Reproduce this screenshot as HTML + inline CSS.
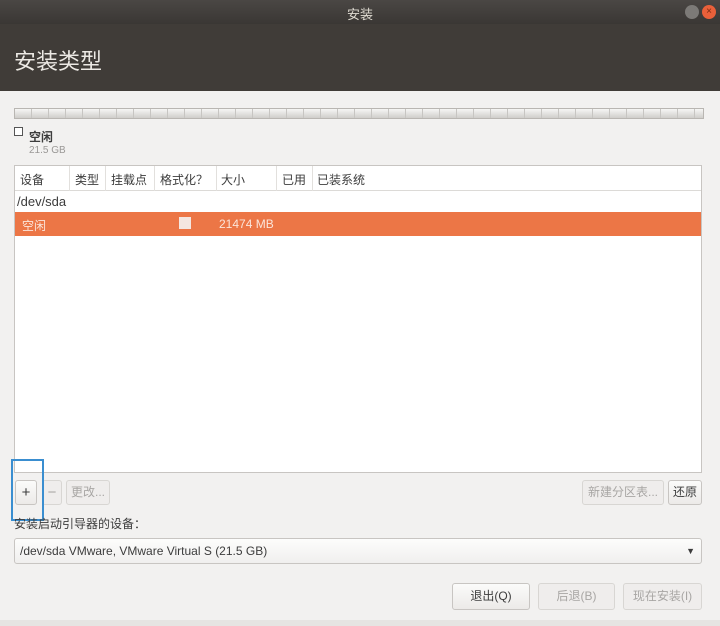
<!DOCTYPE html>
<html><head><meta charset="utf-8"><style>
*{margin:0;padding:0;box-sizing:border-box}
body{width:720px;height:626px;background:#f2f1f0;font-family:"Liberation Sans","Noto Sans CJK SC",sans-serif;position:relative;overflow:hidden;font-size:12px;color:#3c3c3c}
.a{position:absolute}
.btn{position:absolute;border:1px solid #c8c5c2;border-radius:3px;background:linear-gradient(#fbfbfa,#eceae8);text-align:center;font-size:12px;color:#3c3c3c}
.dis{color:#a8a6a4;border-color:#d8d6d3;background:#efedec}
</style></head><body>
<div class="a" style="left:0;top:0;width:720px;height:24px;background:linear-gradient(#4a4744,#3a3734)"></div>
<div class="a" style="left:0;top:4px;width:720px;text-align:center;color:#dfdbd2;font-size:13px">安装</div>
<div class="a" style="left:685px;top:5px;width:14px;height:14px;border-radius:50%;background:#7c7a77"></div>
<div class="a" style="left:702px;top:5px;width:14px;height:14px;border-radius:50%;background:#e9603a;color:#7a2a10;font-size:10px;line-height:14px;text-align:center">×</div>
<div class="a" style="left:0;top:24px;width:720px;height:67px;background:#403c38"></div>
<div class="a" style="left:14px;top:44px;color:#ece9e4;font-size:22px">安装类型</div>
<div class="a" style="left:14px;top:108px;width:690px;height:11px;border:1px solid #b9b6b2;background:linear-gradient(#f6f6f5,#d6d4d2);background-image:repeating-linear-gradient(90deg,transparent 0 16px,#c7c5c2 16px 17px),linear-gradient(#f6f6f5,#d0cecb)"></div>
<div class="a" style="left:14px;top:127px;width:9px;height:9px;border:1px solid #555;background:#fff"></div>
<div class="a" style="left:29px;top:128px;font-size:12px;font-weight:bold;color:#3c3c3c">空闲</div>
<div class="a" style="left:29px;top:145px;font-size:10px;color:#9a9896">21.5 GB</div>
<div class="a" style="left:14px;top:165px;width:688px;height:308px;background:#fff;border:1px solid #c8c5c2"></div>
<div class="a" style="left:15px;top:166px;width:686px;height:25px;border-bottom:1px solid #dcdad7"></div>
<div class="a" style="top:171px;left:20px">设备</div>
<div class="a" style="top:171px;left:75px">类型</div>
<div class="a" style="top:171px;left:111px">挂载点</div>
<div class="a" style="top:171px;left:160px">格式化？</div>
<div class="a" style="top:171px;left:221px">大小</div>
<div class="a" style="top:171px;left:282px">已用</div>
<div class="a" style="top:171px;left:317px">已装系统</div>
<div class="a" style="left:69px;top:166px;width:1px;height:25px;background:#e2e0dd"></div>
<div class="a" style="left:105px;top:166px;width:1px;height:25px;background:#e2e0dd"></div>
<div class="a" style="left:154px;top:166px;width:1px;height:25px;background:#e2e0dd"></div>
<div class="a" style="left:216px;top:166px;width:1px;height:25px;background:#e2e0dd"></div>
<div class="a" style="left:276px;top:166px;width:1px;height:25px;background:#e2e0dd"></div>
<div class="a" style="left:312px;top:166px;width:1px;height:25px;background:#e2e0dd"></div>
<div class="a" style="left:17px;top:194px;font-size:13px">/dev/sda</div>
<div class="a" style="left:15px;top:212px;width:686px;height:24px;background:#ec7646"></div>
<div class="a" style="left:22px;top:217px;color:#fbe5da">空闲</div>
<div class="a" style="left:179px;top:217px;width:12px;height:12px;background:#f4e6e0"></div>
<div class="a" style="left:219px;top:217px;color:#fbe5da">21474 MB</div>
<div class="btn" style="left:15px;top:480px;width:22px;height:25px;line-height:23px;font-size:15px">+</div>
<div class="btn dis" style="left:42px;top:480px;width:20px;height:25px;line-height:23px;font-size:15px">−</div>
<div class="btn dis" style="left:66px;top:480px;width:44px;height:25px;line-height:23px">更改...</div>
<div class="a" style="left:11px;top:459px;width:33px;height:62px;border:2px solid #3a8ed0"></div>
<div class="btn dis" style="left:582px;top:480px;width:82px;height:25px;line-height:23px">新建分区表...</div>
<div class="btn" style="left:668px;top:480px;width:34px;height:25px;line-height:23px">还原</div>
<div class="a" style="left:14px;top:515px;font-size:12px">安装启动引导器的设备：</div>
<div class="btn" style="left:14px;top:538px;width:688px;height:26px;text-align:left;padding-left:5px;line-height:24px;font-size:12px;background:linear-gradient(#fdfdfc,#f0efee)">/dev/sda VMware, VMware Virtual S (21.5 GB)<span style="position:absolute;right:6px;top:0;font-size:9px">▼</span></div>
<div class="a" style="left:0;top:620px;width:720px;height:6px;background:#e6e4e2"></div>
<div class="btn" style="left:452px;top:583px;width:78px;height:27px;line-height:25px">退出(Q)</div>
<div class="btn dis" style="left:538px;top:583px;width:77px;height:27px;line-height:25px">后退(B)</div>
<div class="btn dis" style="left:623px;top:583px;width:79px;height:27px;line-height:25px">现在安装(I)</div>
</body></html>
